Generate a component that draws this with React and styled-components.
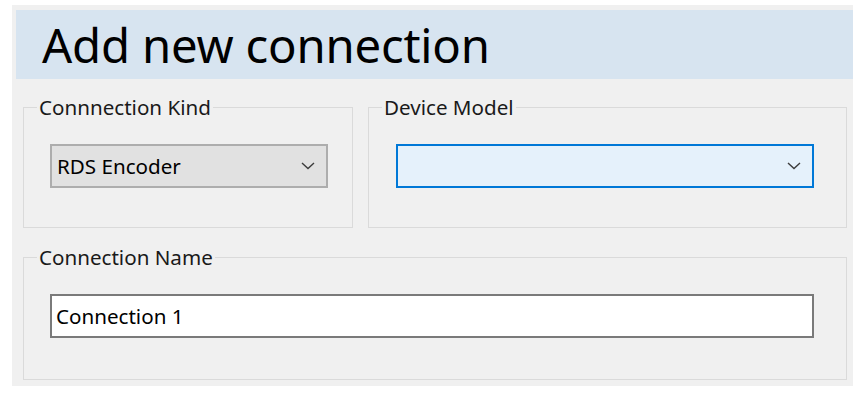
import React from 'react'
import styled, { createGlobalStyle } from 'styled-components'

const GlobalStyle = createGlobalStyle`
  html, body {
    margin: 0;
    padding: 0;
    background: #ffffff;
  }
  body {
    font-family: "Noto Sans", "Liberation Sans", sans-serif;
    color: #000;
  }
`

const Window = styled.div`
  margin: 5px 0 0 12px;
  width: 841px;
  height: 381px;
  box-sizing: border-box;
  padding: 5px 0 0 4px;
  background: #f0f0f0;
  display: flex;
  flex-direction: column;
`

const Header = styled.div`
  height: 69px;
  background: #d7e4f0;
  display: flex;
  align-items: center;
  padding-left: 26px;
  h1 {
    margin: 0;
    font-size: 47.3px;
    font-weight: 400;
    line-height: 1;
    color: #000;
    letter-spacing: -0.2px;
  }
`

const Body = styled.div`
  display: grid;
  grid-template-columns: 330px 479px;
  column-gap: 15px;
  row-gap: 16px;
  padding: 15px 0 0 7px;
`

const Group = styled.fieldset`
  grid-column: ${p => (p.$wide ? '1 / -1' : 'auto')};
  margin: 0;
  min-width: 0;
  border: 1px solid #dadada;
  padding: 24px ${p => p.$right}px ${p => p.$bottom}px ${p => p.$left}px;
  legend {
    margin-left: ${p => 13 - p.$left}px;
    padding: 0 2px;
    font-size: 20.6px;
    line-height: 26px;
    color: #1a1a1a;
  }
`

const Combo = styled.div`
  height: 44px;
  box-sizing: border-box;
  display: flex;
  align-items: center;
  justify-content: space-between;
  padding: 0 10px 0 5px;
  font-size: 20.6px;
  background: ${p => (p.$focused ? '#e5f1fb' : '#e1e1e1')};
  border: ${p => (p.$focused ? '2px solid #0078d7' : '2px solid #adadad')};
  color: #000;
`

const TextBox = styled.div`
  height: 44px;
  box-sizing: border-box;
  display: flex;
  align-items: center;
  padding: 0 4px;
  font-size: 20.6px;
  background: #ffffff;
  border: 2px solid #7a7a7a;
`

const Chevron = () => (
  <svg width="16" height="10" viewBox="0 0 16 10">
    <path d="M2 2 L8 7.5 L14 2" fill="none" stroke="#3c3c3c" strokeWidth="1.4" />
  </svg>
)

export default function App() {
  return (
    <>
      <GlobalStyle />
      <Window>
        <Header>
          <h1>Add new connection</h1>
        </Header>
        <Body>
          <Group $left={26} $right={24} $bottom={39}>
            <legend>Connnection Kind</legend>
            <Combo>
              <span>RDS Encoder</span>
              <Chevron />
            </Combo>
          </Group>
          <Group $left={27} $right={32} $bottom={39}>
            <legend>Device Model</legend>
            <Combo $focused>
              <span />
              <Chevron />
            </Combo>
          </Group>
          <Group $wide $left={26} $right={32} $bottom={41}>
            <legend>Connection Name</legend>
            <TextBox>Connection 1</TextBox>
          </Group>
        </Body>
      </Window>
    </>
  )
}
